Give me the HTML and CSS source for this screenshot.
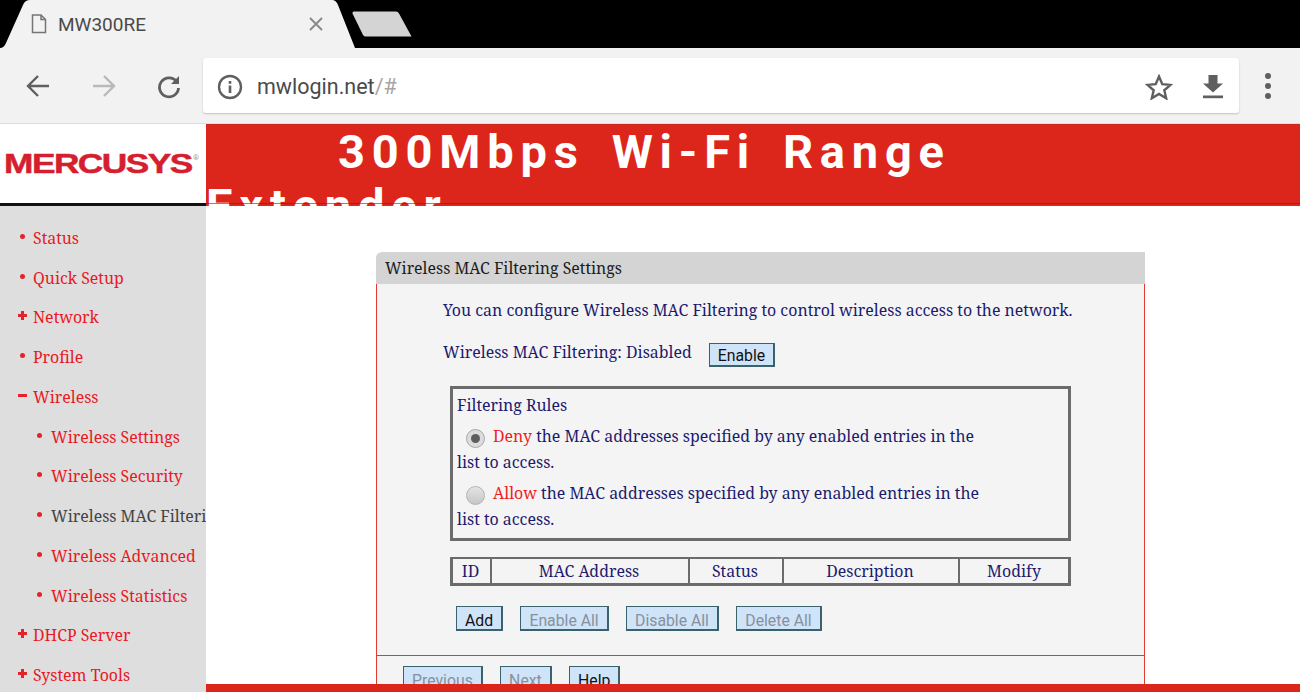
FILE: index.html
```html
<!DOCTYPE html>
<html lang="en">
<head>
<meta charset="utf-8">
<title>MW300RE</title>
<link rel="stylesheet" href="styles.css">
</head>
<body>
<div class="browser">
  <div class="tabstrip">
    <div class="tab">
      <svg class="tab-shape" width="356" height="48" viewBox="0 0 356 48"><path d="M0 48 Q4 48 6 43 L23 5 Q25 0 30 0 L332 0 Q336 0 338 5 L355 48 Z" fill="#f2f2f2"/></svg>
      <svg class="tab-doc" width="16" height="20" viewBox="0 0 16 20"><path d="M1.5 1h8.5l4.500 4.500V18.500H1.500z M10 1v4.500h4.500" fill="none" stroke="#757575" stroke-width="1.500"/></svg>
      <span class="tab-title">MW300RE</span>
      <svg class="tab-close" width="16" height="16" viewBox="0 0 16 16"><path d="M2 2L14 14M14 2L2 14" stroke="#8a8a8a" stroke-width="2"/></svg>
    </div>
    <svg class="newtab" width="62" height="28" viewBox="0 0 62 28"><path d="M3 1.500H45Q47 1.500 48 3.500L60.500 26.500H15Q13 26.500 12 25L1.500 3.500Q1 1.500 3 1.500Z" fill="#d4d4d4"/></svg>
  </div>
  <div class="toolbar">
    <svg class="navicon" width="26" height="26" viewBox="0 0 26 26"><path d="M24 13H4M13 3L3 13L13 23" fill="none" stroke="#5f5f5f" stroke-width="2.400"/></svg>
    <svg class="navicon" width="26" height="26" viewBox="0 0 26 26"><path d="M2 13H22M13 3L23 13L13 23" fill="none" stroke="#b9b9b9" stroke-width="2.400"/></svg>
    <svg class="navicon" width="26" height="26" viewBox="0 0 26 26"><path d="M20.500 8.500A9.500 9.500 0 1 0 22.500 15" fill="none" stroke="#5f5f5f" stroke-width="2.800"/><path d="M23 3V11H15Z" fill="#5f5f5f"/></svg>
    <div class="omnibox">
      <svg class="info" width="26" height="26" viewBox="0 0 26 26"><circle cx="13" cy="13" r="11" fill="none" stroke="#5f5f5f" stroke-width="2.400"/><rect x="11.700" y="11.500" width="2.600" height="7.500" fill="#5f5f5f"/><rect x="11.700" y="7" width="2.600" height="2.800" fill="#5f5f5f"/></svg>
      <span class="url">mwlogin.net<span class="url-dim">/#</span></span>
      <svg class="star" width="28" height="26" viewBox="0 0 28 26"><path d="M14 2.500l3.300 7.700 8.200.700-6.200 5.400 1.900 8-7.200-4.300-7.200 4.300 1.900-8-6.200-5.400 8.200-.700z" fill="none" stroke="#5f5f5f" stroke-width="2.400"/></svg>
      <svg class="download" width="22" height="26" viewBox="0 0 22 26"><path d="M6.500 1h9v8.500h5.500L11 18.500 1 9.500h5.500z" fill="#5f5f5f"/><rect x="1" y="21.500" width="20" height="2.700" fill="#5f5f5f"/></svg>
    </div>
    <div class="kebab"><i></i><i></i><i></i></div>
  </div>
  <div class="page">
    <aside class="side">
      <div class="logo"><span class="logo-text">MERCUSYS</span><span class="logo-reg">®</span></div>
      <ul class="menu">
        <li class="dot">Status</li>
        <li class="dot">Quick Setup</li>
        <li class="plus">Network</li>
        <li class="dot">Profile</li>
        <li class="minus">Wireless</li>
        <li class="dot sub">Wireless Settings</li>
        <li class="dot sub">Wireless Security</li>
        <li class="dot sub current">Wireless MAC Filtering</li>
        <li class="dot sub">Wireless Advanced</li>
        <li class="dot sub">Wireless Statistics</li>
        <li class="plus">DHCP Server</li>
        <li class="plus">System Tools</li>
      </ul>
    </aside>
    <main class="main">
      <header class="banner"><h1 class="banner-title">300Mbps Wi-Fi Range Extender</h1></header>
      <div class="content">
        <section class="panel">
          <h2 class="panel-head">Wireless MAC Filtering Settings</h2>
          <div class="panel-body">
            <p class="intro">You can configure Wireless MAC Filtering to control wireless access to the network.</p>
            <div class="state"><span>Wireless MAC Filtering: Disabled</span><button class="btn">Enable</button></div>
            <div class="rules">
              <div class="rules-title">Filtering Rules</div>
              <div class="rule"><span class="radio on"></span><span class="red">Deny</span> the MAC addresses specified by any enabled entries in the<br>list to access.</div>
              <div class="rule"><span class="radio"></span><span class="red">Allow</span> the MAC addresses specified by any enabled entries in the<br>list to access.</div>
            </div>
            <div class="entries">
              <div class="cell c-id">ID</div>
              <div class="cell c-mac">MAC Address</div>
              <div class="cell c-status">Status</div>
              <div class="cell c-desc">Description</div>
              <div class="cell c-mod">Modify</div>
            </div>
            <div class="actions">
              <button class="btn">Add</button>
              <button class="btn off">Enable All</button>
              <button class="btn off">Disable All</button>
              <button class="btn off">Delete All</button>
            </div>
          </div>
          <div class="panel-foot">
            <button class="btn off">Previous</button>
            <button class="btn off">Next</button>
            <button class="btn">Help</button>
          </div>
        </section>
      </div>
      <div class="bottom-bar"></div>
    </main>
  </div>
</div>
</body>
</html>
```
FILE: styles.css
```css
* { box-sizing: border-box; }
html, body { margin: 0; height: 692px; overflow: hidden; background: #fff; }
.browser { width: 1300px; height: 692px; display: flex; flex-direction: column; font-family: "Roboto", sans-serif; }

.tabstrip { height: 48px; background: #000; display: flex; align-items: flex-start; flex: none; }
.tab { position: relative; width: 356px; height: 48px; display: flex; align-items: center; padding: 0 0 0 31px; }
.tab-shape { position: absolute; left: 0; top: 0; }
.tab-doc, .tab-title, .tab-close { position: relative; }
.tab-title { margin-left: 11px; font-size: 19px; color: #4a4a4a; width: 232px; }
.tab-close { margin-left: 18px; }
.newtab { margin: 10px 0 0 -5px; }

.toolbar { height: 76px; flex: none; background: #f2f2f2; display: flex; align-items: center; padding: 0 0 0 25px; border-bottom: 1px solid #dcdcdc; }
.navicon { margin-right: 39.500px; flex: none; }
.navicon:nth-child(3) { margin-right: 21px; }
.omnibox { width: 1036px; height: 55px; background: #fff; border-radius: 3px; box-shadow: 0 1px 2px rgba(0,0,0,.2); display: flex; align-items: center; padding: 2px 15px 0 14px; }
.url { margin-left: 14px; font-size: 21.500px; color: #4a4a4a; flex: 1; }
.url-dim { color: #a6a6a6; }
.star { margin-right: 29px; }
.kebab { margin-left: 26px; display: flex; flex-direction: column; gap: 4px; }
.kebab i { width: 6px; height: 6px; border-radius: 50%; background: #5f5f5f; }

.page { flex: 1; display: flex; min-height: 0; font-family: "Noto Serif", "DejaVu Serif", serif; }
.side { width: 206px; flex: none; background: #dedede; overflow: hidden; }
.logo { height: 82px; background: #fff; border-bottom: 3px solid #111; display: flex; align-items: center; padding: 0 0 0 4px; }
.logo-text { font-family: "Liberation Sans", sans-serif; font-weight: 700; font-size: 28px; color: #d51f2e; letter-spacing: -1.200px; transform: scaleX(1.260); transform-origin: left center; -webkit-text-stroke: .5px #d51f2e; }
.logo-reg { font-size: 7px; color: #999; margin: -12px 0 0 40px; }
.menu { list-style: none; margin: 12.750px 0 0; padding: 0; }
.menu li { position: relative; height: 39.750px; line-height: 39.750px; padding-left: 33px; font-size: 15.900px; color: #e8191f; white-space: nowrap; }
.menu li.sub { padding-left: 51px; }
.menu li.current { color: #444; }
.menu li::before { content: ""; position: absolute; background: #e2232a; }
.dot::before { left: 20px; top: 15px; width: 5px; height: 5px; border-radius: 50%; }
.menu li.sub::before { left: 37px; }
.minus::before { left: 18px; top: 16px; width: 9px; height: 3px; }
.plus::before { left: 18px; top: 16px; width: 9px; height: 3px; }
.plus::after { content: ""; position: absolute; left: 21px; top: 13px; width: 3px; height: 9px; background: #e2232a; }

.main { flex: 1; position: relative; min-width: 0; overflow: hidden; }
.banner { position: relative; height: 82px; background: #dd261b; overflow: hidden; box-shadow: inset 0 1px 0 #c9291f; }
.banner::after { content: ""; position: absolute; left: 0; right: 0; top: 79px; height: 1px; background: rgba(150,20,10,.6); }
.banner-title { margin: 0; padding-top: 1px; font-family: "Roboto", sans-serif; font-weight: 700; font-size: 47px; line-height: 54px; letter-spacing: 6.800px; color: #fff; text-indent: 132px; word-spacing: 8.500px; width: 800px; }
.content { padding: 46px 0 0 170px; }
.panel { width: 769px; }
.panel-head { margin: 0; height: 32px; background: #d4d4d4; border-radius: 6px 0 0 0; padding: 0 0 0 9px; font-weight: 400; font-size: 15.850px; line-height: 32px; color: #1c1c1c; }
.panel-body { background: #f4f4f4; border: 1px solid #e03a32; border-top: none; height: 372px; padding: 15px 0 0 66px; color: #1c1a6e; font-size: 15.920px; }
.intro { margin: 0; line-height: 22px; }
.state { display: flex; align-items: flex-start; margin-top: 20px; line-height: 22px; }
.btn { display: block; font-family: "Roboto", sans-serif; font-size: 15.800px; height: 25px; padding: 6px 8px 0; background: #cfe3f9; border: 2px solid #39626b; border-width: 1px 2px 2px 1px; color: #111; line-height: 16px; }
.btn.off { color: #87919c; }
.state .btn { height: 24px; padding-top: 2px; line-height: 19px; margin: 2px 0 0 17px; }
.rules { width: 621px; height: 155px; margin: 19px 0 0 7px; border: 3px solid #6b6b6b; padding: 3px 0 0 4px; line-height: 26px; }
.rules-title { height: 26px; }
.rule { margin-top: 5px; }
.radio { display: inline-block; width: 19px; height: 19px; border-radius: 50%; margin: 0 8px 0 9px; vertical-align: -6px; background: linear-gradient(#e4e4e4, #c6c6c6); border: 1px solid #b4b4b4; position: relative; }
.radio.on { background: #dcdcdc; border-color: #a8a8a8; }
.radio.on::after { content: ""; position: absolute; left: 4px; top: 4px; width: 9px; height: 9px; border-radius: 50%; background: #5e5e5e; }
.red { color: #f01c1c; }
.entries { display: flex; width: 621px; height: 29px; margin: 16px 0 0 7px; border: 3px solid #6b6b6b; border-width: 2px 3px 3px 3px; }
.cell { text-align: center; line-height: 25px; padding-right: 2px; border-right: 2px solid #6b6b6b; }
.c-id { width: 39px; }
.c-mac { width: 198px; }
.c-status { width: 94px; }
.c-desc { width: 176px; }
.c-mod { flex: 1; border-right: none; padding-right: 0; }
.actions { display: flex; gap: 17.300px; margin: 20px 0 0 13px; }
.panel-foot { background: #f4f4f4; border: 1px solid #e03a32; border-width: 0 1px; height: 40px; display: flex; gap: 17.300px; padding: 10px 0 0 26px; }
.bottom-bar { position: absolute; left: 0; right: 0; bottom: 0; height: 8px; background: #dd261b; }
```
